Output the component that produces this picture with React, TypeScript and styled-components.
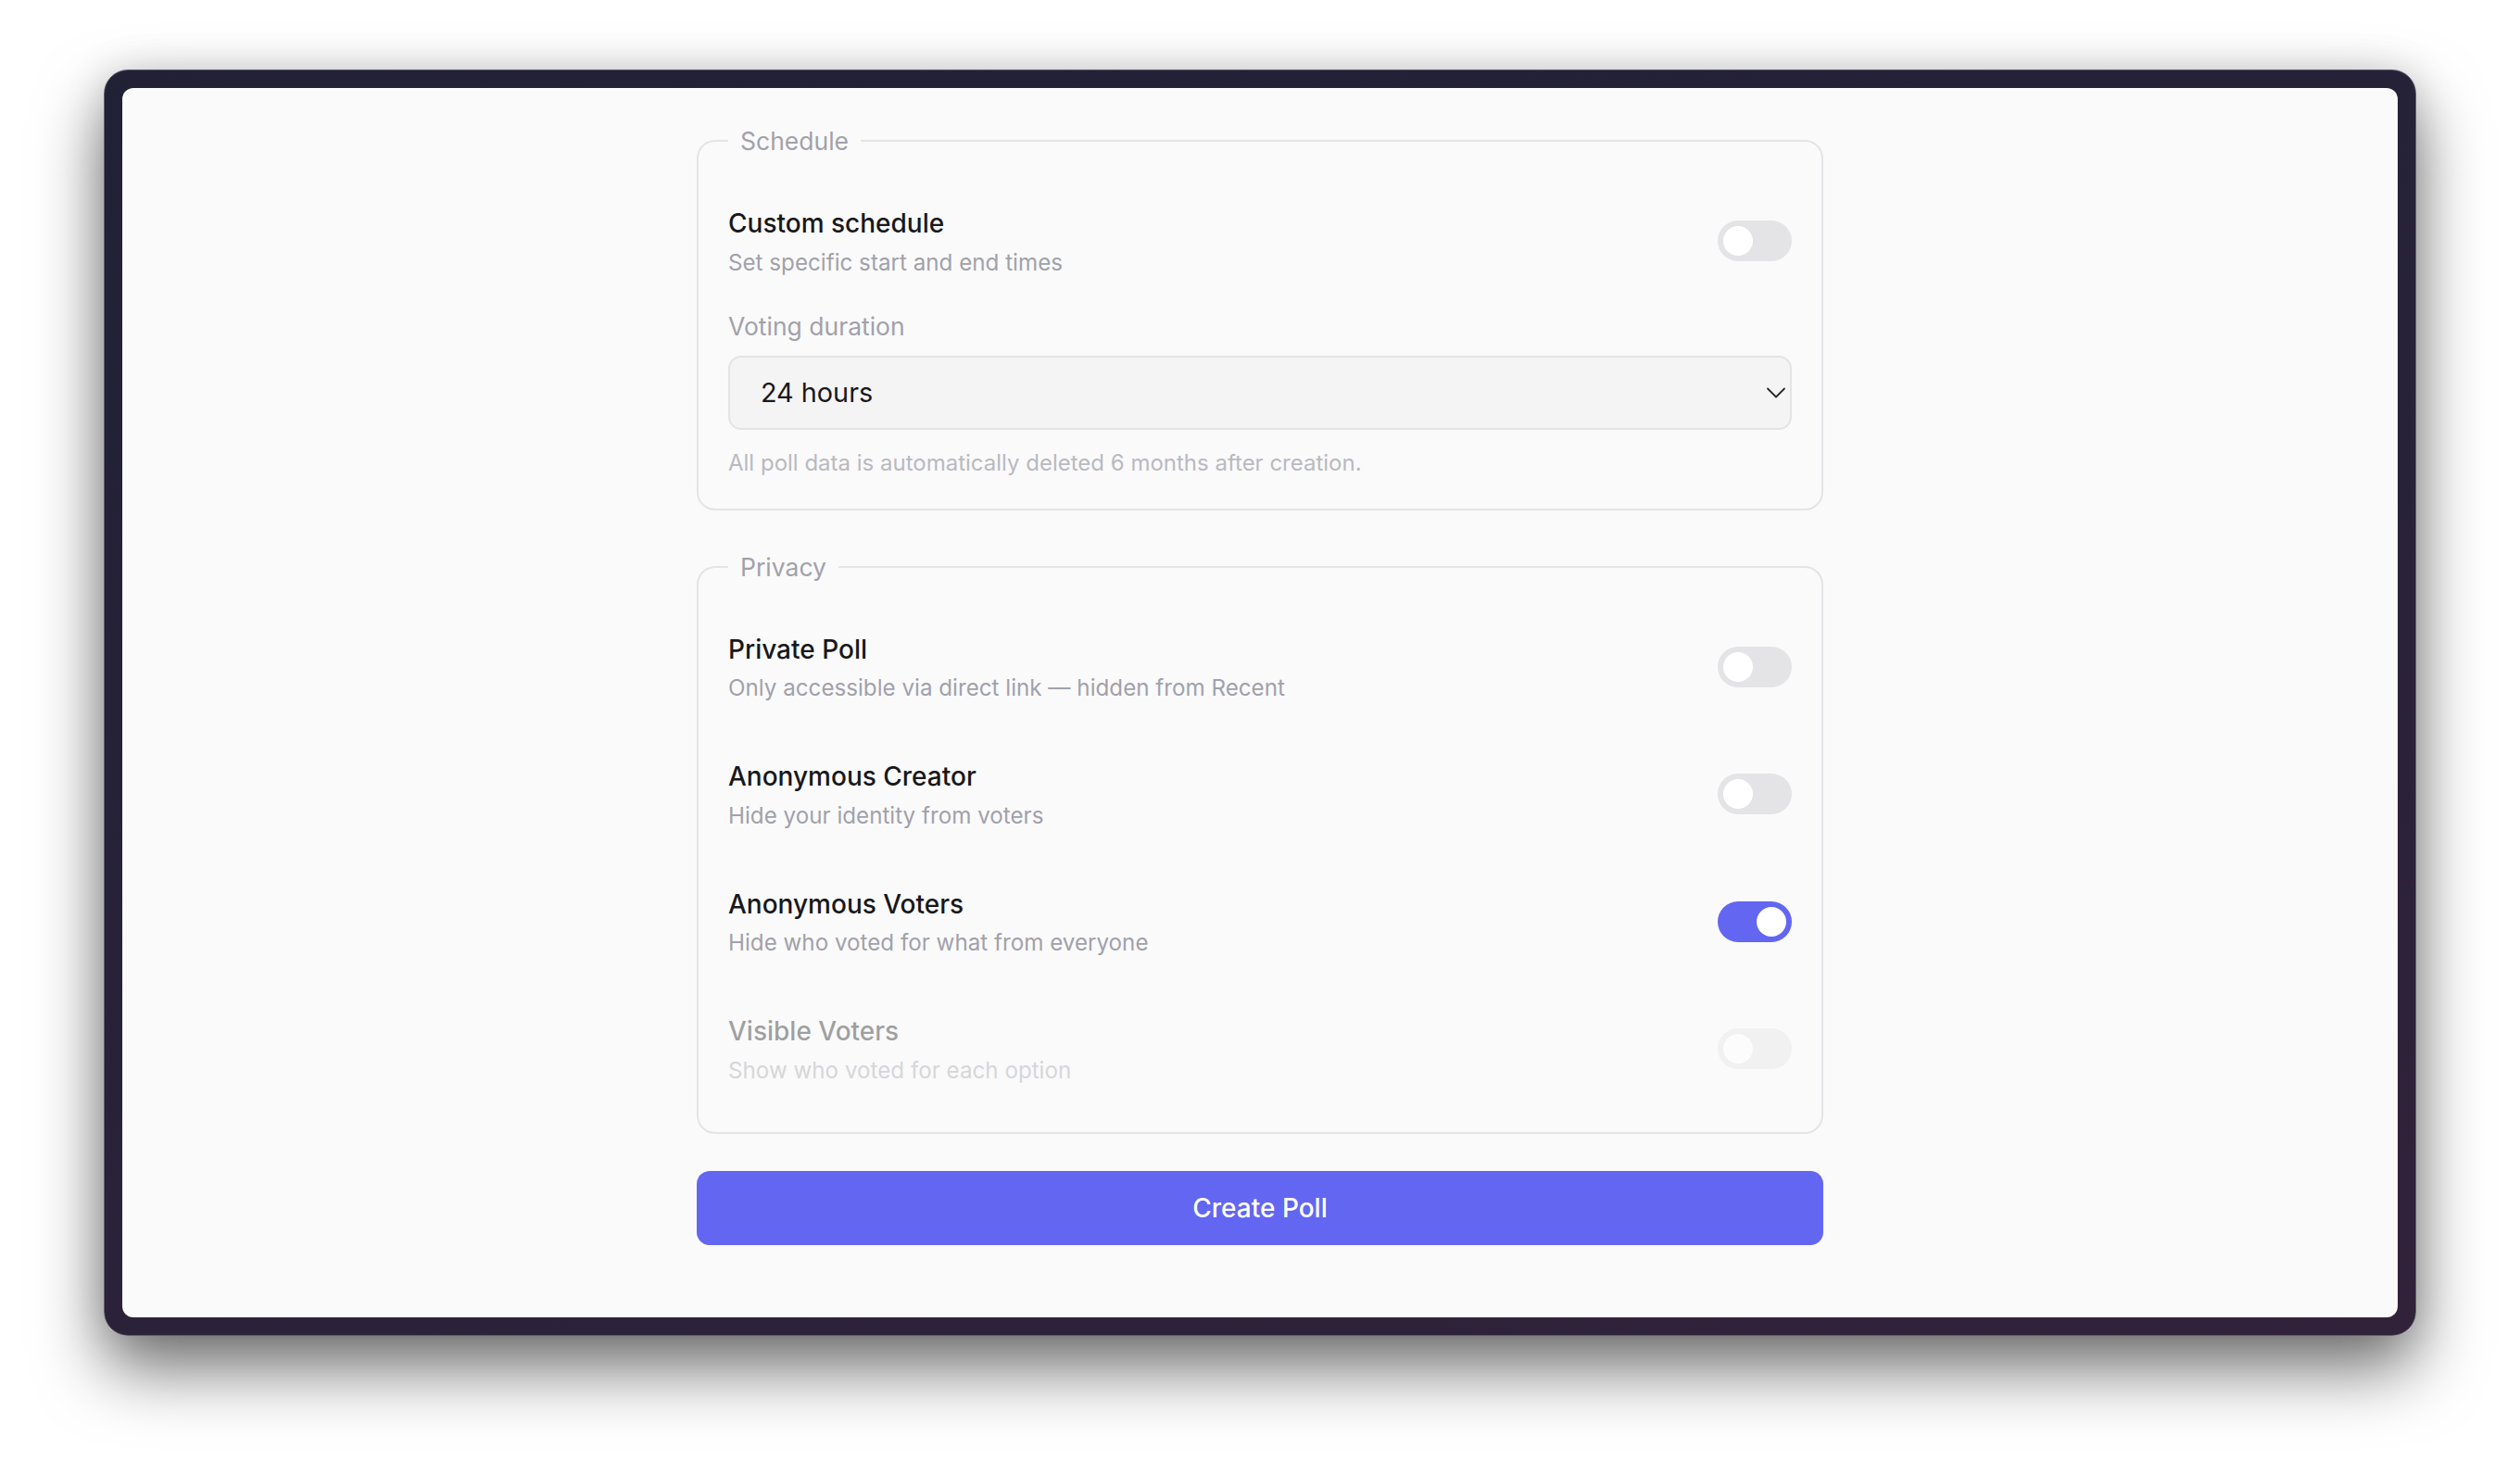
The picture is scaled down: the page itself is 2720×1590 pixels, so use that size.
import React from "react";
import styled, { createGlobalStyle } from "styled-components";

const GlobalStyle = createGlobalStyle`
  html, body { margin: 0; padding: 0; background: #ffffff; }
  body { font-family: Inter, "Noto Sans", sans-serif; -webkit-font-smoothing: antialiased; }
  *, *::before, *::after { box-sizing: border-box; }
`;

const Stage = styled.div`
  width: 2720px;
  height: 1590px;
  padding: 75px 112px 0;
  overflow: hidden;
  background: #ffffff;
`;

const Device = styled.div`
  height: 1367px;
  padding: 19px;
  border-radius: 26px;
  border: 1px solid #5e5b6c;
  background: linear-gradient(165deg, #212135 0%, #282238 55%, #31223a 100%);
  box-shadow: 0 36px 72px rgba(0, 0, 0, 0.55), 0 0 44px rgba(0, 0, 0, 0.13);
`;

const Screen = styled.main`
  height: 100%;
  border-radius: 12px;
  background: #fafafa;
  overflow: hidden;
  display: flex;
  flex-direction: column;
  align-items: center;
  padding-top: 36px;
`;

const Form = styled.form`
  width: 1216px;
  display: flex;
  flex-direction: column;
  gap: 40px;
`;

const Section = styled.fieldset`
  margin: 0;
  min-width: 0;
  border: 2px solid #e4e4e7;
  border-radius: 20px;
  padding: 30px 32px 32px;
`;

const Legend = styled.legend`
  padding: 0 13px;
  font-size: 26.5px;
  line-height: 42px;
  color: #a1a1aa;
`;

const RowList = styled.div`
  display: flex;
  flex-direction: column;
  gap: 23px;
`;

const ToggleRow = styled.div<{ $disabled?: boolean }>`
  display: flex;
  align-items: center;
  justify-content: space-between;
  padding: 17px 0;
  opacity: ${(p) => (p.$disabled ? 0.4 : 1)};
`;

const RowText = styled.div`
  display: flex;
  flex-direction: column;
`;

const Title = styled.div`
  font-size: 28px;
  line-height: 42px;
  font-weight: 500;
  color: #18181b;
`;

const Description = styled.div`
  margin-top: 3.5px;
  font-size: 24.2px;
  line-height: 35px;
  color: #a1a1aa;
`;

const Track = styled.button<{ $on: boolean }>`
  flex: none;
  width: 80px;
  height: 44px;
  padding: 6px;
  border: none;
  border-radius: 22px;
  background: ${(p) => (p.$on ? "#6366f1" : "#e4e4e7")};
  display: flex;
  align-items: center;
  cursor: pointer;
`;

const Knob = styled.span<{ $on: boolean }>`
  width: 32px;
  height: 32px;
  border-radius: 50%;
  background: #ffffff;
  transform: translateX(${(p) => (p.$on ? "36px" : "0")});
`;

const Field = styled.div`
  margin-top: 17px;
  display: flex;
  flex-direction: column;
  gap: 14px;
`;

const Label = styled.label`
  font-size: 26.5px;
  line-height: 35px;
  color: #a1a1aa;
`;

const SelectWrap = styled.div`
  position: relative;
`;

const Select = styled.select`
  appearance: none;
  -webkit-appearance: none;
  width: 100%;
  height: 80px;
  padding: 0 33px;
  border: 2px solid #e4e4e7;
  border-radius: 14px;
  background: #f4f4f5;
  font-family: Inter, "Noto Sans", sans-serif;
  font-size: 28.8px;
  color: #18181b;
  outline: none;
`;

const Chevron = styled.svg`
  position: absolute;
  right: -1px;
  top: 22px;
  pointer-events: none;
`;

const Helper = styled.p`
  margin: 18px 0 0;
  font-size: 24px;
  line-height: 35px;
  color: #b9b9c0;
`;

const SubmitButton = styled.button`
  height: 80px;
  border: none;
  border-radius: 14px;
  background: #6366f1;
  color: #ffffff;
  font-family: Inter, "Noto Sans", sans-serif;
  font-size: 28px;
  font-weight: 500;
  cursor: pointer;
`;

function Switch({ on }: { on: boolean }) {
  return (
    <Track type="button" $on={on} aria-pressed={on}>
      <Knob $on={on} />
    </Track>
  );
}

const privacy = [
  { title: "Private Poll", desc: "Only accessible via direct link \u2014 hidden from Recent", on: false },
  { title: "Anonymous Creator", desc: "Hide your identity from voters", on: false },
  { title: "Anonymous Voters", desc: "Hide who voted for what from everyone", on: true },
  { title: "Visible Voters", desc: "Show who voted for each option", on: false, disabled: true },
];

export default function App() {
  return (
    <>
      <GlobalStyle />
      <Stage>
        <Device>
          <Screen>
            <Form onSubmit={(e) => e.preventDefault()}>
              <Section>
                <Legend>Schedule</Legend>
                <ToggleRow>
                  <RowText>
                    <Title>Custom schedule</Title>
                    <Description>Set specific start and end times</Description>
                  </RowText>
                  <Switch on={false} />
                </ToggleRow>
                <Field>
                  <Label htmlFor="duration">Voting duration</Label>
                  <SelectWrap>
                    <Select id="duration" defaultValue="24">
                      <option value="1">1 hour</option>
                      <option value="6">6 hours</option>
                      <option value="12">12 hours</option>
                      <option value="24">24 hours</option>
                      <option value="72">3 days</option>
                      <option value="168">7 days</option>
                    </Select>
                    <Chevron width="36" height="36" viewBox="0 0 24 24" fill="none" stroke="#27272a" strokeWidth="1.2" strokeLinecap="round" strokeLinejoin="round">
                      <path d="m6 9 6 6 6-6" />
                    </Chevron>
                  </SelectWrap>
                </Field>
                <Helper>All poll data is automatically deleted 6 months after creation.</Helper>
              </Section>

              <Section>
                <Legend>Privacy</Legend>
                <RowList>
                  {privacy.map((item) => (
                    <ToggleRow key={item.title} $disabled={item.disabled}>
                      <RowText>
                        <Title>{item.title}</Title>
                        <Description>{item.desc}</Description>
                      </RowText>
                      <Switch on={item.on} />
                    </ToggleRow>
                  ))}
                </RowList>
              </Section>

              <SubmitButton type="submit">Create Poll</SubmitButton>
            </Form>
          </Screen>
        </Device>
      </Stage>
    </>
  );
}
